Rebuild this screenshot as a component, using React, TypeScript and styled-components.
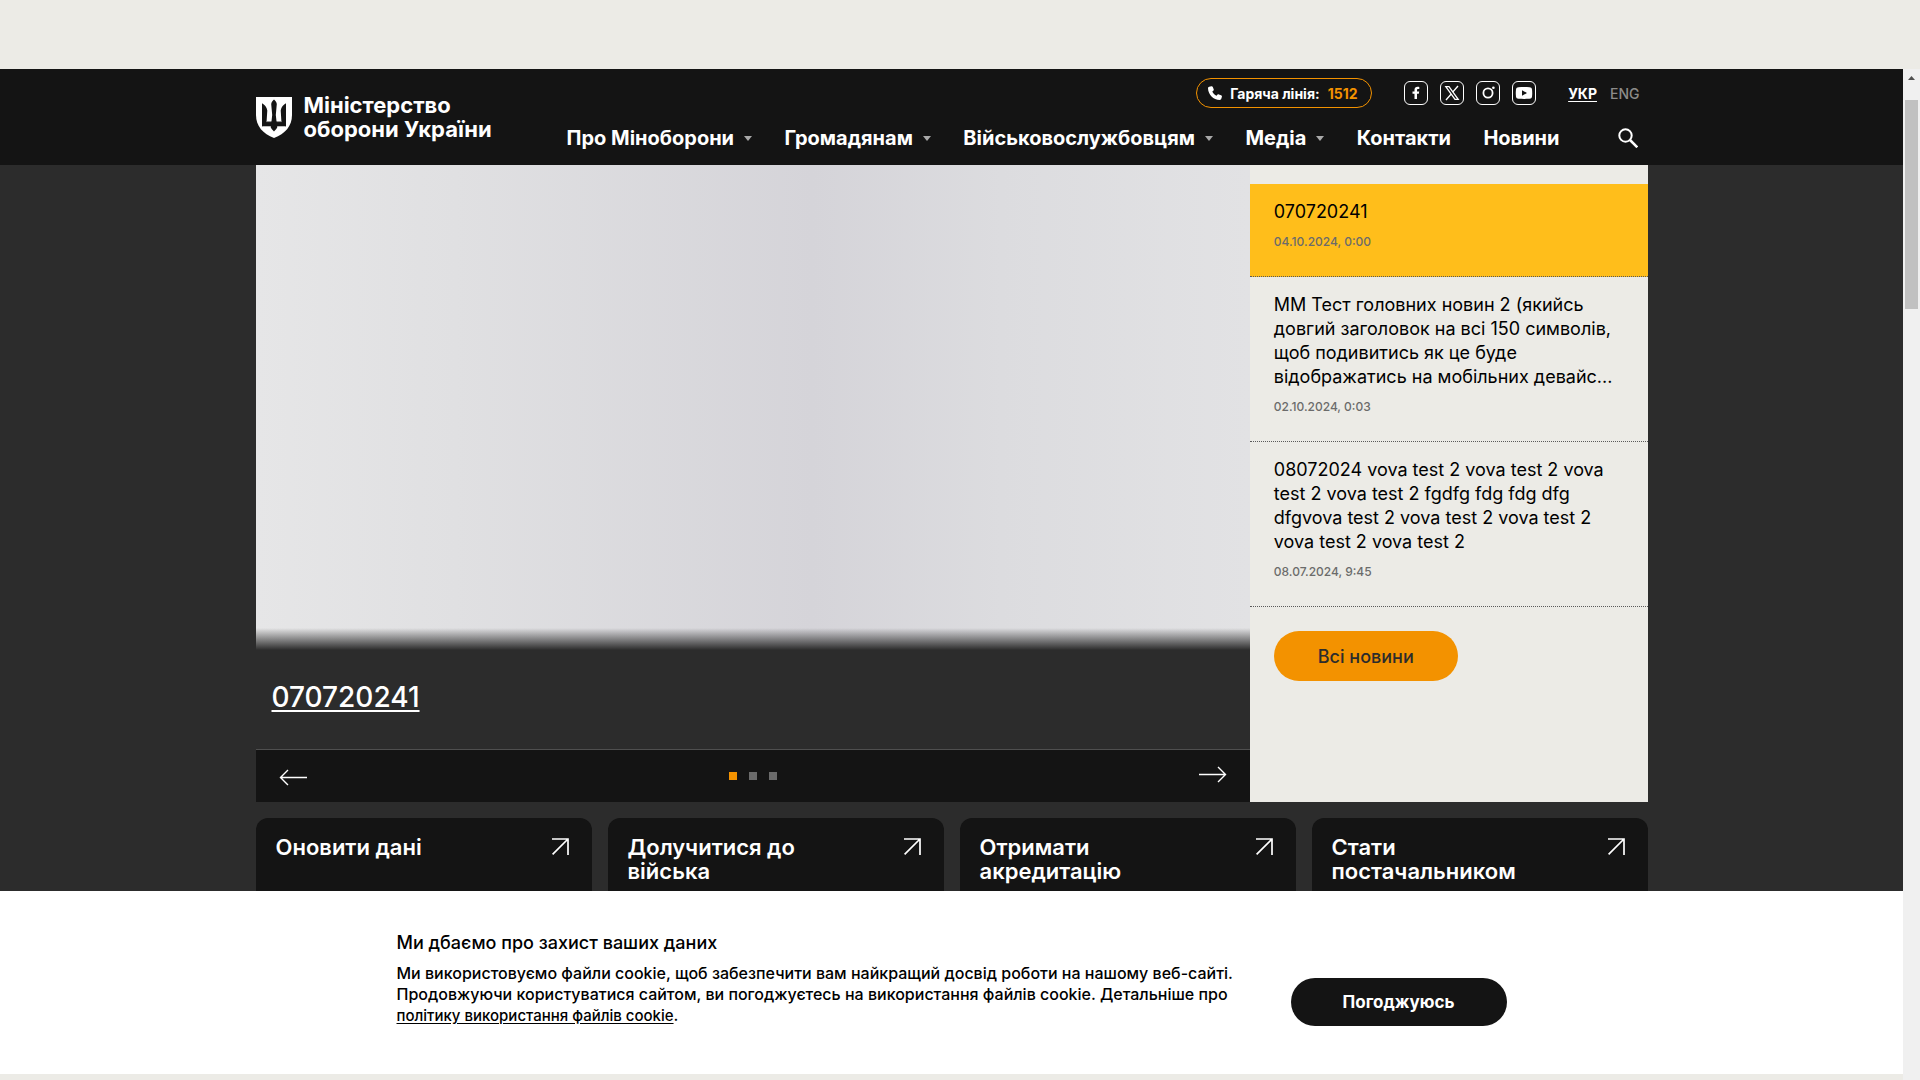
import React from 'react';
import styled, { createGlobalStyle } from 'styled-components';

const GlobalStyle = createGlobalStyle`
  *, *::before, *::after { box-sizing: border-box; }
  body {
    margin: 0;
    background: #ecebe6;
    font-family: Inter, "Liberation Sans", sans-serif;
    color: #000;
  }
  a { color: inherit; text-decoration: none; }
  button { font: inherit; color: inherit; border: 0; padding: 0; background: none; cursor: pointer; }
  h1, h2, h3, p, ul, ol { margin: 0; padding: 0; font-weight: inherit; }
  ul, ol { list-style: none; }
  svg { display: block; flex: none; }
`;

const Page = styled.div`
  display: flex;
  flex-direction: column;
  height: 100vh;
  padding-top: 69px;
`;

const Frame = styled.div`
  display: flex;
  flex: 1;
  min-height: 0;
`;

const Column = styled.div`
  display: flex;
  flex-direction: column;
  flex: 1;
  min-width: 0;
  padding-bottom: 6px;
`;

const ScrollTrack = styled.div`
  width: 17px;
  padding: 7px 2px;
  background: #f0f0f0;
`;

const ScrollArrow = styled.svg`
  margin: 0 auto 19px;
`;

const ScrollThumb = styled.div`
  height: 209px;
  background: #c1c1c1;
`;

const Content = styled.div`
  flex: 1;
  min-height: 0;
  overflow: hidden;
  background: #2c2c2c;
`;

const Container = styled.div`
  width: 100%;
  max-width: 1392px;
  margin: 0 auto;
`;

const Header = styled.header`
  background: #141414;
  color: #fff;
`;

const HeaderRow = styled(Container)`
  display: flex;
  height: 96px;
`;

const Brand = styled.a`
  display: flex;
  align-items: center;
  gap: 12px;
  width: 311px;
  font-size: 22px;
  line-height: 24px;
  font-weight: 700;
`;

const HeaderMain = styled.div`
  display: flex;
  flex: 1;
  flex-direction: column;
  padding-right: 8px;
`;

const TopTools = styled.div`
  display: flex;
  justify-content: flex-end;
  align-items: center;
  padding-top: 9px;
`;

const HotLine = styled.a`
  display: flex;
  align-items: center;
  gap: 8px;
  width: 176px;
  height: 30px;
  padding: 0 11px;
  border: 1px solid #f39200;
  border-radius: 15px;
  font-size: 14px;
  font-weight: 700;
  white-space: nowrap;
  strong { color: #f39200; font-weight: 700; }
`;

const Socials = styled.ul`
  display: flex;
  gap: 12px;
  margin: 0 32px;
`;

const Languages = styled.div`
  display: flex;
  gap: 13px;
  font-size: 14px;
  line-height: 20px;
  padding-top: 2px;
`;

const Language = styled.a<{ $current?: boolean }>`
  font-weight: ${p => (p.$current ? 700 : 500)};
  color: ${p => (p.$current ? '#fff' : '#8c8b89')};
  text-decoration: ${p => (p.$current ? 'underline' : 'none')};
  text-underline-offset: 2px;
`;

const NavRow = styled.nav`
  display: flex;
  justify-content: space-between;
  align-items: center;
  height: 24px;
  margin-top: 18px;
  padding-right: 2px;
`;

const NavList = styled.ul`
  display: flex;
  flex: 1;
  justify-content: space-between;
  margin-right: 58px;
`;

const NavLink = styled.a`
  display: flex;
  align-items: center;
  gap: 10px;
  font-size: 20px;
  line-height: 24px;
  font-weight: 700;
  white-space: nowrap;
`;

const Hero = styled(Container)`
  display: grid;
  grid-template-columns: 5fr 2fr;
`;

const Slider = styled.section`
  display: flex;
  flex-direction: column;
  color: #fff;
`;

const Slide = styled.div`
  display: flex;
  flex: 1;
  flex-direction: column;
  justify-content: flex-end;
  background: linear-gradient(90deg, #e6e6e7 0%, #e0e0e2 20%, #d5d4d9 56%, #dcdcdf 75%, #e2e2e4 100%);
`;

const Fade = styled.div`
  height: 22px;
  background: linear-gradient(180deg, rgba(44, 44, 44, 0), #2c2c2c);
`;

const Caption = styled.h2`
  height: 99px;
  padding: 28px 16px;
  background: #2c2c2c;
  font-size: 28px;
  line-height: 38px;
  font-weight: 500;
  a { text-decoration: underline; text-decoration-thickness: 2px; text-underline-offset: 3px; }
`;

const SliderBar = styled.div`
  display: flex;
  align-items: center;
  justify-content: space-between;
  height: 53px;
  padding: 0 23px;
  background: #141414;
  border-top: 1px solid #4f4f4f;
`;

const Dots = styled.div`
  display: flex;
  gap: 12px;
`;

const Dot = styled.button<{ $active?: boolean }>`
  width: 8px;
  height: 8px;
  background: ${p => (p.$active ? '#f39200' : '#6b6b6b')};
`;

const NewsPanel = styled.aside`
  min-height: 637px;
  padding-top: 19px;
  background: #ecebe6;
`;

const NewsItem = styled.li<{ $active?: boolean }>`
  padding: 16px 24px 24px;
  border-bottom: 1px dotted #5a5a5a;
  background: ${p => (p.$active ? '#ffbe1b' : 'transparent')};
`;

const NewsTitle = styled.a`
  display: block;
  margin-bottom: 8px;
  font-size: 18px;
  line-height: 24px;
  white-space: nowrap;
`;

const NewsDate = styled.time`
  display: block;
  font-size: 12px;
  line-height: 20px;
  font-weight: 500;
  color: #6b6b6b;
`;

const AllNews = styled.a`
  display: inline-flex;
  align-items: center;
  justify-content: center;
  width: 184px;
  height: 50px;
  margin: 24px;
  border-radius: 25px;
  background: #f39200;
  color: #2c2c2c;
  font-size: 18px;
  font-weight: 500;
`;

const Services = styled(Container)`
  display: grid;
  grid-template-columns: repeat(4, 1fr);
  gap: 16px;
  padding-top: 16px;
`;

const ServiceCard = styled.a`
  display: flex;
  justify-content: space-between;
  align-items: flex-start;
  min-height: 160px;
  padding: 17px 23px 20px 20px;
  border-radius: 12px;
  background: #141414;
  color: #fff;
  font-size: 22px;
  line-height: 24px;
  font-weight: 600;
  svg { margin-top: 3px; }
`;

const CookieBar = styled.section`
  display: flex;
  align-items: center;
  height: 183px;
  background: #fff;
`;

const CookieRow = styled(Container)`
  display: flex;
  justify-content: space-between;
  align-items: center;
  max-width: 1110px;
  padding-bottom: 8px;
`;

const CookieTitle = styled.h3`
  margin-bottom: 8px;
  font-size: 18px;
  line-height: 24px;
  font-weight: 500;
`;

const CookieText = styled.p`
  font-size: 16px;
  line-height: 21px;
  font-weight: 500;
  white-space: nowrap;
  a { text-decoration: underline; text-underline-offset: 2px; font-size: 15px; }
`;

const AcceptButton = styled.button`
  width: 216px;
  height: 48px;
  margin-top: 46px;
  border-radius: 24px;
  background: #141414;
  color: #fff;
  font-size: 17px;
  font-weight: 700;
`;

const Shield = () => (
  <svg width="36" height="41" viewBox="0 0 36 41" aria-hidden="true">
    <path d="M0 0H36V18C36 29 29 37 18 41C7 37 0 29 0 18Z" fill="#fff" />
    <path
      fill="#141414"
      d="M6 6.300C8.500 7.800 10.700 10 11.300 13.500L10.600 24.300H15.500L16.200 18L15.200 7C15.600 5 16.500 3.600 18 2.500C19.500 3.600 20.400 5 20.800 7L19.800 18L20.500 24.300H25.400L24.700 13.500C25.300 10 27.500 7.800 30 6.300V29.600H21.600C20.800 31.600 19.600 33 18 34.500C16.400 33 15.200 31.600 14.400 29.600H6Z"
    />
    <path d="M10.200 24.600H15.300M20.700 24.600H25.800M6.500 29.500H15M21 29.500H29.500" stroke="#fff" strokeOpacity=".55" strokeWidth=".8" />
  </svg>
);

const Phone = () => (
  <svg width="14" height="14" viewBox="0 0 14 14" aria-hidden="true">
    <path
      fill="#fff"
      d="M3.300.2C4 0 4.500.3 4.800 1L5.700 3.200C5.900 3.800 5.800 4.200 5.300 4.700L4.300 5.600C5 7.300 6.700 9.100 8.500 9.800L9.400 8.700C9.800 8.200 10.300 8.100 10.900 8.400L13.100 9.300C13.800 9.600 14.100 10.100 13.900 10.800L13.300 12.800C13.100 13.500 12.600 14 11.800 14C5.200 13.700.3 8.800 0 2.200C0 1.400.5.9 1.200.7Z"
    />
  </svg>
);

const SocialBox = ({ children }: { children: React.ReactNode }) => (
  <svg width="24" height="24" viewBox="0 0 24 24" fill="none" aria-hidden="true">
    <rect x=".5" y=".5" width="23" height="23" rx="5.500" stroke="#fff" />
    {children}
  </svg>
);

const socials = [
  {
    name: 'Facebook',
    icon: (
      <path fill="#fff" d="M10.500 18V12.800H8.500V10.400H10.500V8.800C10.500 6.800 11.700 5.700 13.600 5.700C14.300 5.700 15 5.800 15.300 5.900V8H14.200C13.300 8 13 8.500 13 9.200V10.400H15.200L14.800 12.800H13V18Z" />
    ),
  },
  {
    name: 'X',
    icon: (
      <>
        <path d="M5.800 5.600H9L18.200 18.400H15Z" stroke="#fff" strokeWidth="1.300" />
        <path d="M18 5L12.900 10.900M11.100 13.100L6 19" stroke="#fff" strokeWidth="1.400" />
      </>
    ),
  },
  {
    name: 'Instagram',
    icon: (
      <>
        <circle cx="12" cy="12" r="4.600" stroke="#fff" strokeWidth="1.800" />
        <circle cx="17.400" cy="6.700" r="1.300" fill="#fff" />
      </>
    ),
  },
  {
    name: 'YouTube',
    icon: (
      <>
        <path fill="#fff" d="M4 8.500C4.200 7 5 6.300 6.500 6.200C10 6 14 6 17.500 6.200C19 6.300 19.800 7 20 8.500C20.300 11 20.300 13 20 15.500C19.800 17 19 17.700 17.500 17.800C14 18 10 18 6.500 17.800C5 17.700 4.200 17 4 15.500C3.700 13 3.700 11 4 8.500Z" />
        <path fill="#141414" d="M10 9.200L15 12L10 14.800Z" />
      </>
    ),
  },
];

const Caret = () => (
  <svg width="8" height="5" viewBox="0 0 8 5" aria-hidden="true">
    <path d="M0 0H8L4 5Z" fill="#a9a9a9" />
  </svg>
);

const SearchIcon = () => (
  <svg width="20" height="20" viewBox="0 0 20 20" fill="none" stroke="#fff" strokeWidth="2" aria-hidden="true">
    <circle cx="7.500" cy="7.500" r="6.200" />
    <path d="M12 12L19.300 19.300" strokeWidth="2.500" />
  </svg>
);

const ArrowLeft = () => (
  <svg width="28" height="20" viewBox="0 0 28 20" fill="none" stroke="#fff" strokeWidth="1.400" aria-hidden="true">
    <path d="M28 11.500H1.500M9 4L1.500 11.500L9 19" />
  </svg>
);

const ArrowRight = () => (
  <svg width="28" height="20" viewBox="0 0 28 20" fill="none" stroke="#fff" strokeWidth="1.400" aria-hidden="true">
    <path d="M0 8.500H26.500M19 1L26.500 8.500L19 16" />
  </svg>
);

const ArrowOut = () => (
  <svg width="17" height="17" viewBox="0 0 17 17" fill="none" stroke="#fff" strokeWidth="1.700" aria-hidden="true">
    <path d="M0 1H16V17M16 1L.6 16.400" />
  </svg>
);

const navItems = [
  { label: 'Про Міноборони', menu: true },
  { label: 'Громадянам', menu: true },
  { label: 'Військовослужбовцям', menu: true },
  { label: 'Медіа', menu: true },
  { label: 'Контакти', menu: false },
  { label: 'Новини', menu: false },
];

const news = [
  { lines: ['070720241'], date: '04.10.2024, 0:00' },
  {
    lines: ['ММ Тест головних новин 2 (якийсь', 'довгий заголовок на всі 150 символів,', 'щоб подивитись як це буде', 'відображатись на мобільних девайс...'],
    date: '02.10.2024, 0:03',
  },
  {
    lines: ['08072024 vova test 2 vova test 2 vova', 'test 2 vova test 2 fgdfg fdg fdg dfg', 'dfgvova test 2 vova test 2 vova test 2', 'vova test 2 vova test 2'],
    date: '08.07.2024, 9:45',
  },
];

const services = [['Оновити дані'], ['Долучитися до', 'війська'], ['Отримати', 'акредитацію'], ['Стати', 'постачальником']];

const Lines = ({ lines }: { lines: string[] }) => (
  <>
    {lines.map((line, i) => (
      <React.Fragment key={line}>
        {i > 0 && <br />}
        {line}
      </React.Fragment>
    ))}
  </>
);

export default function App() {
  return (
    <>
      <GlobalStyle />
      <Page>
        <Frame>
          <Column>
            <Header>
              <HeaderRow>
                <Brand href="#">
                  <Shield />
                  <span>
                    Міністерство
                    <br />
                    оборони України
                  </span>
                </Brand>
                <HeaderMain>
                  <TopTools>
                    <HotLine href="tel:1512">
                      <Phone />
                      <span>Гаряча лінія:</span>
                      <strong>1512</strong>
                    </HotLine>
                    <Socials>
                      {socials.map(s => (
                        <li key={s.name}>
                          <a href="#" aria-label={s.name}>
                            <SocialBox>{s.icon}</SocialBox>
                          </a>
                        </li>
                      ))}
                    </Socials>
                    <Languages>
                      <Language href="#" $current>УКР</Language>
                      <Language href="#">ENG</Language>
                    </Languages>
                  </TopTools>
                  <NavRow>
                    <NavList>
                      {navItems.map(item => (
                        <li key={item.label}>
                          <NavLink href="#">
                            {item.label}
                            {item.menu && <Caret />}
                          </NavLink>
                        </li>
                      ))}
                    </NavList>
                    <button type="button" aria-label="Пошук">
                      <SearchIcon />
                    </button>
                  </NavRow>
                </HeaderMain>
              </HeaderRow>
            </Header>
            <Content>
              <Hero>
                <Slider>
                  <Slide>
                    <Fade />
                    <Caption>
                      <a href="#">070720241</a>
                    </Caption>
                  </Slide>
                  <SliderBar>
                    <button type="button" aria-label="Попередній слайд">
                      <ArrowLeft />
                    </button>
                    <Dots>
                      <Dot type="button" aria-label="Слайд 1" $active />
                      <Dot type="button" aria-label="Слайд 2" />
                      <Dot type="button" aria-label="Слайд 3" />
                    </Dots>
                    <button type="button" aria-label="Наступний слайд">
                      <ArrowRight />
                    </button>
                  </SliderBar>
                </Slider>
                <NewsPanel>
                  <ul>
                    {news.map((item, i) => (
                      <NewsItem key={item.date} $active={i === 0}>
                        <NewsTitle href="#">
                          <Lines lines={item.lines} />
                        </NewsTitle>
                        <NewsDate>{item.date}</NewsDate>
                      </NewsItem>
                    ))}
                  </ul>
                  <AllNews href="#">Всі новини</AllNews>
                </NewsPanel>
              </Hero>
              <Services>
                {services.map(lines => (
                  <ServiceCard href="#" key={lines[0]}>
                    <span>
                      <Lines lines={lines} />
                    </span>
                    <ArrowOut />
                  </ServiceCard>
                ))}
              </Services>
            </Content>
            <CookieBar>
              <CookieRow>
                <div>
                  <CookieTitle>Ми дбаємо про захист ваших даних</CookieTitle>
                  <CookieText>
                    Ми використовуємо файли cookie, щоб забезпечити вам найкращий досвід роботи на нашому веб-сайті.
                    <br />
                    Продовжуючи користуватися сайтом, ви погоджуєтесь на використання файлів cookie. Детальніше про
                    <br />
                    <a href="#">політику використання файлів cookie</a>.
                  </CookieText>
                </div>
                <AcceptButton type="button">Погоджуюсь</AcceptButton>
              </CookieRow>
            </CookieBar>
          </Column>
          <ScrollTrack aria-hidden="true">
            <ScrollArrow width="7" height="5" viewBox="0 0 7 5">
              <path d="M3.500 0L7 4H0Z" fill="#505050" />
            </ScrollArrow>
            <ScrollThumb />
          </ScrollTrack>
        </Frame>
      </Page>
    </>
  );
}
